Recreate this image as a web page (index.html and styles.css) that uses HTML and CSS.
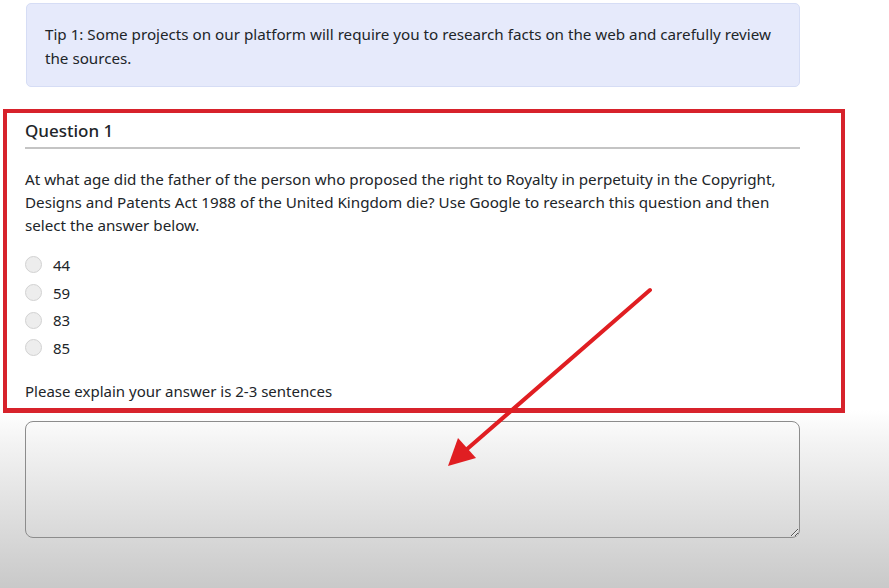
FILE: index.html
```html
<!DOCTYPE html>
<html lang="en">
<head>
    <meta charset="UTF-8">
    <meta name="viewport" content="width=device-width, initial-scale=1.0">
    <title>Question 1</title>
    <link rel="stylesheet" href="styles.css">
</head>
<body>
    <div class="page">
        <div class="tip">
            Tip 1: Some projects on our platform will require you to research facts on the web and carefully review the sources.
        </div>

        <div class="highlight">
            <h2 class="question-title">Question 1</h2>
            <p class="question-text">At what age did the father of the person who proposed the right to Royalty in perpetuity in the Copyright, Designs and Patents Act 1988 of the United Kingdom die? Use Google to research this question and then select the answer below.</p>
            <div class="options">
                <label class="option"><input type="radio" name="q1" value="44"><span>44</span></label>
                <label class="option"><input type="radio" name="q1" value="59"><span>59</span></label>
                <label class="option"><input type="radio" name="q1" value="83"><span>83</span></label>
                <label class="option"><input type="radio" name="q1" value="85"><span>85</span></label>
            </div>
            <p class="explain">Please explain your answer is 2-3 sentences</p>
        </div>

        <textarea class="answer"></textarea>
    </div>

    <svg class="arrow" width="889" height="588" viewBox="0 0 889 588">
        <line x1="650" y1="290" x2="466" y2="450" stroke="#e01e22" stroke-width="4" stroke-linecap="round"/>
        <polygon points="448,466 458,438 476,458" fill="#e01e22"/>
    </svg>
</body>
</html>
```

FILE: styles.css
```css
html, body {
    margin: 0;
    padding: 0;
}
body {
    font-family: "Noto Sans", "Open Sans", sans-serif;
    color: #212529;
    background: linear-gradient(to bottom, #fff 0, #fff 410px, #f3f3f3 444px, #c9c9c9 588px);
    min-height: 588px;
    overflow: hidden;
    position: relative;
}
.page {
    width: 775px;
    padding: 3px 0 0 25px;
}
.tip {
    margin-left: 1px;
    background: #e6eafb;
    border: 1px solid #d6ddf5;
    border-radius: 5px;
    padding: 18px 26px 16px 18px;
    font-size: 15.2px;
    line-height: 24px;
}
.highlight {
    margin: 22px 0 0 -22px;
    width: 775px;
    padding: 6px 41px 5px 18px;
    border: 4px solid #d7222b;
    border-bottom-width: 5px;
}
.question-title {
    margin: 0;
    font-size: 17px;
    font-weight: 500;
    line-height: 24px;
    padding-bottom: 4px;
    border-bottom: 2px solid #c4c4c4;
}
.question-text {
    margin: 19px 0 0;
    font-size: 15.2px;
    line-height: 23px;
}
.options {
    margin-top: 14px;
}
.option {
    display: flex;
    align-items: center;
    height: 27.7px;
    font-size: 15px;
}
.option input {
    margin: 0 11px 0 0;
    width: 17px;
    height: 17px;
    appearance: none;
    border: 1px solid #d2d2d2;
    border-radius: 50%;
    background: #ededed;
}
.explain {
    margin: 18px 0 0;
    font-size: 15px;
    line-height: 23px;
}
.answer {
    display: block;
    margin-top: 8px;
    width: 775px;
    height: 117px;
    box-sizing: border-box;
    border: 1px solid #8c8c8c;
    border-radius: 8px;
    background: transparent;
    resize: vertical;
}
.arrow {
    position: absolute;
    top: 0;
    left: 0;
    pointer-events: none;
}
```
